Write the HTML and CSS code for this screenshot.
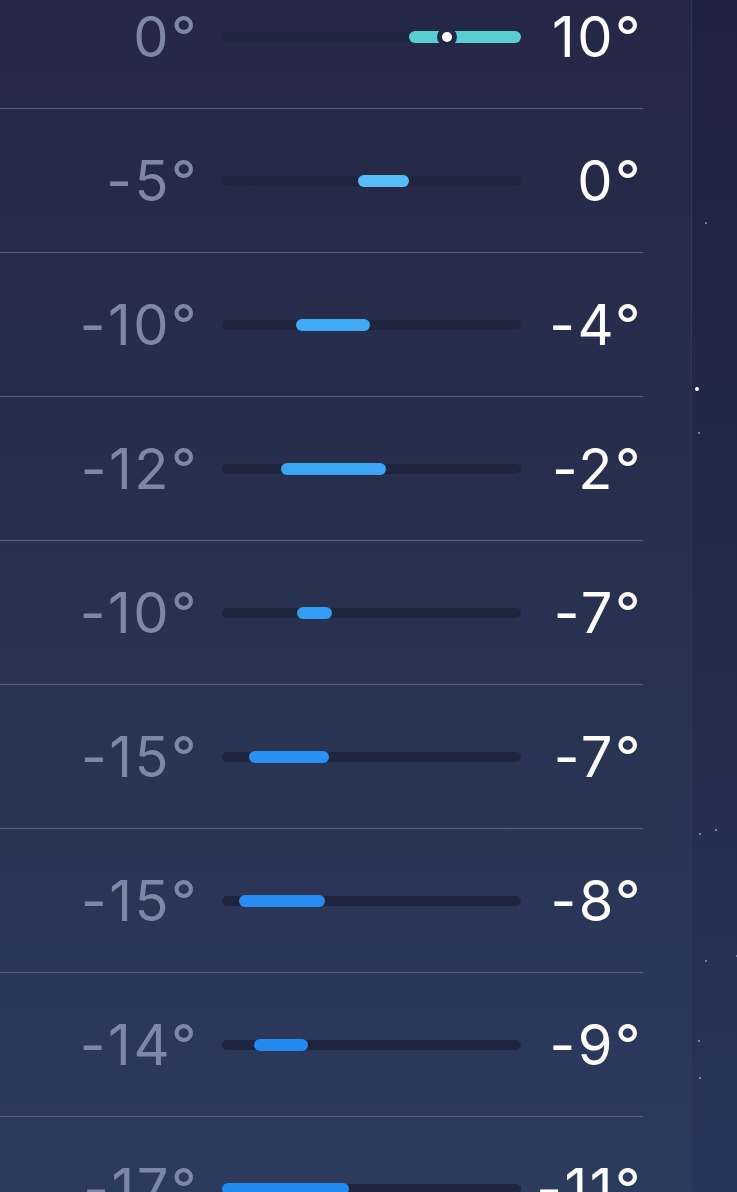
FILE: index.html
```html
<!DOCTYPE html>
<html>
<head>
<meta charset="utf-8">
<link rel="stylesheet" href="styles.css">
</head>
<body>
<div class="screen">
  <div class="panel">
    <div class="list">
      <div class="row">
        <div class="low">0°</div>
        <div class="track"><div class="fill" style="left:187px;width:112px;background:#5ccdd3"></div><div class="now" style="left:225px"></div></div>
        <div class="high">10°</div>
      </div>
      <div class="row">
        <div class="low">-5°</div>
        <div class="track"><div class="fill" style="left:136px;width:51px;background:#58bdf6"></div></div>
        <div class="high">0°</div>
      </div>
      <div class="row">
        <div class="low">-10°</div>
        <div class="track"><div class="fill" style="left:74px;width:74px;background:#42a9f4"></div></div>
        <div class="high">-4°</div>
      </div>
      <div class="row">
        <div class="low">-12°</div>
        <div class="track"><div class="fill" style="left:59px;width:105px;background:#3ea4f4"></div></div>
        <div class="high">-2°</div>
      </div>
      <div class="row">
        <div class="low">-10°</div>
        <div class="track"><div class="fill" style="left:75px;width:35px;background:#369cf2"></div></div>
        <div class="high">-7°</div>
      </div>
      <div class="row">
        <div class="low">-15°</div>
        <div class="track"><div class="fill" style="left:27px;width:80px;background:#2b90f1"></div></div>
        <div class="high">-7°</div>
      </div>
      <div class="row">
        <div class="low">-15°</div>
        <div class="track"><div class="fill" style="left:17px;width:86px;background:#288cf1"></div></div>
        <div class="high">-8°</div>
      </div>
      <div class="row">
        <div class="low">-14°</div>
        <div class="track"><div class="fill" style="left:32px;width:54px;background:#258af0"></div></div>
        <div class="high">-9°</div>
      </div>
      <div class="row">
        <div class="low">-17°</div>
        <div class="track"><div class="fill" style="left:0px;width:127px;background:#2189f0"></div></div>
        <div class="high">-11°</div>
      </div>
    </div>
  </div>
  <div class="sky">
    <span class="star" style="top:222px;left:13px"></span>
    <span class="star big" style="top:387px;left:3px"></span>
    <span class="star" style="top:432px;left:6px"></span>
    <span class="star" style="top:829px;left:23px"></span>
    <span class="star" style="top:833px;left:7px"></span>
    <span class="star" style="top:960px;left:13px"></span>
    <span class="star" style="top:1040px;left:6px"></span>
    <span class="star" style="top:1077px;left:7px"></span>
    <span class="star" style="top:955px;left:44px"></span>
  </div>
</div>
</body>
</html>
```

FILE: styles.css
```css
html, body {
  margin: 0;
  padding: 0;
  overflow: hidden;
}
body {
  width: 737px;
  height: 1192px;
  background: #242845;
  font-family: Inter, "Liberation Sans", sans-serif;
}
.screen {
  display: flex;
  width: 737px;
  height: 1192px;
  overflow: hidden;
}
.panel {
  width: 691px;
  flex: none;
  background: linear-gradient(180deg, #252746 0%, #28304f 45%, #2c3a5e 100%);
  border-right: 1px solid #2f3658;
  overflow: hidden;
}
.list {
  margin-top: -35px;
  width: 643px;
}
.row {
  height: 144px;
  display: flex;
  align-items: center;
  border-bottom: 1px solid #5a6184;
  box-sizing: border-box;
}
.low {
  width: 199px;
  text-align: right;
  color: #7f87a7;
  font-size: 56px;
  font-weight: 400;
  letter-spacing: 2.5px;
  line-height: 1;
}
.track {
  position: relative;
  margin-left: 23px;
  width: 299px;
  height: 10px;
  border-radius: 5px;
  background: #20253f;
}
.fill {
  position: absolute;
  top: -1px;
  height: 12px;
  border-radius: 6px;
}
.now {
  position: absolute;
  top: 0;
  width: 10px;
  height: 10px;
  margin-left: -5px;
  border-radius: 50%;
  background: #ffffff;
  box-shadow: 0 0 0 5px #232845;
}
.high {
  width: 122px;
  text-align: right;
  color: #ffffff;
  font-size: 56px;
  font-weight: 400;
  letter-spacing: 2.5px;
  line-height: 1;
}
.sky {
  position: relative;
  flex: 1;
  background: linear-gradient(180deg, #1f2240 0%, #232a4a 50%, #28355a 100%);
}
.star {
  position: absolute;
  width: 2px;
  height: 2px;
  border-radius: 50%;
  background: #c8cde0;
  opacity: 0.7;
}
.star.big {
  width: 4px;
  height: 4px;
  background: #ffffff;
  opacity: 1;
}
```
